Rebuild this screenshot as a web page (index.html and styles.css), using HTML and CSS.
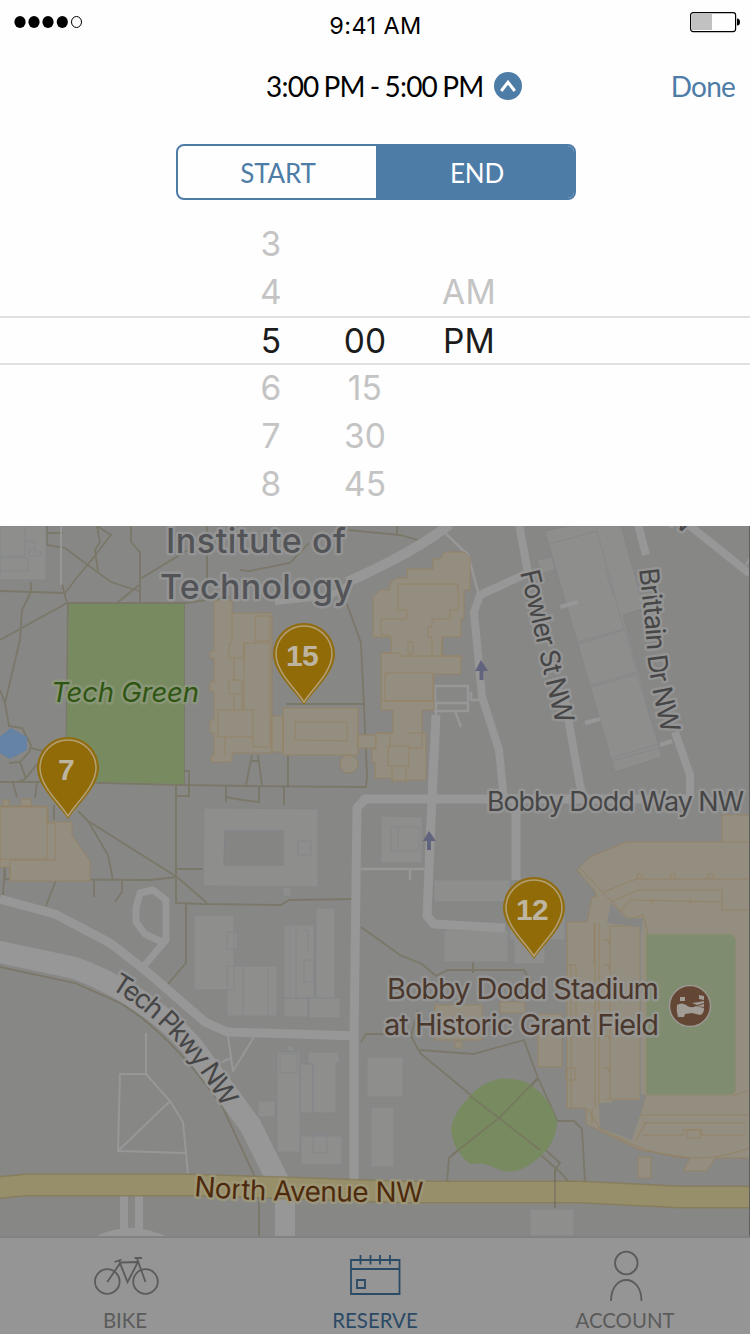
FILE: index.html
```html
<!DOCTYPE html>
<html lang="en">
<head>
<meta charset="utf-8">
<title>Reserve</title>
<link rel="stylesheet" href="styles.css">
</head>
<body>
<div class="screen">
  <section class="panel">
    <header class="status">
      <svg class="signal" width="70" height="14" viewBox="0 0 70 14"><g fill="#000"><ellipse cx="6" cy="7" rx="5.6" ry="6"/><ellipse cx="20" cy="7" rx="5.6" ry="6"/><ellipse cx="34" cy="7" rx="5.6" ry="6"/><ellipse cx="48.300" cy="7" rx="5.600" ry="6"/></g><ellipse cx="62.500" cy="7" rx="5" ry="5.500" fill="none" stroke="#000"/></svg>
      <span class="clock">9:41 AM</span>
      <svg class="battery" width="51" height="22" viewBox="0 0 51 22"><rect x=".6" y="1.600" width="45" height="19" rx="2.500" fill="none" stroke="#000" stroke-width="1.200"/><rect x="2" y="3" width="20" height="16" fill="#c1c1c1"/><path d="M47 7.500q3 0 3 3.500t-3 3.500z" fill="#000"/></svg>
    </header>
    <div class="titlebar">
      <span class="range">3:00 PM - 5:00 PM</span>
      <svg class="chevron" width="28" height="28" viewBox="0 0 28 28"><circle cx="14" cy="14" r="14" fill="#4d7ca7"/><path d="M7.200 19 14 10.300 20.800 19" fill="none" stroke="#fff" stroke-width="3"/></svg>
      <span class="done">Done</span>
    </div>
    <div class="segment"><span class="seg">START</span><span class="seg seg-on">END</span></div>
    <div class="picker">
      <div class="row"><span>3</span><span></span><span></span></div>
      <div class="row"><span>4</span><span></span><span>AM</span></div>
      <div class="row row-on"><span>5</span><span>00</span><span>PM</span></div>
      <div class="row"><span>6</span><span>15</span><span></span></div>
      <div class="row"><span>7</span><span>30</span><span></span></div>
      <div class="row"><span>8</span><span>45</span><span></span></div>
    </div>
  </section>

  <svg class="map" width="750" height="710" viewBox="0 526 750 710">
    <defs>
      <path id="p-fowler" d="M520 572 Q534 630 541 661 T560 740"/>
      <path id="p-brittain" d="M639 569 Q645 618 647 650 Q649 680 664 742"/>
      <path id="p-tech" d="M110 988 C149 1012 187 1042 229 1119"/>
      <path id="p-north" d="M194 1196 Q240 1200 290 1201 T440 1202"/>
      <g id="pin"><path d="M0 50C-8 37-31 18-31-1A31 31 0 0 1 31-1C31 18 8 37 0 50Z" fill="#906d10"/><path d="M0 47C-8 34-28 17-28-1A28 28 0 0 1 28-1C28 17 8 34 0 47Z" fill="#906b08" stroke="#b3a076" stroke-width="1.500"/></g>
    </defs>
    <rect x="0" y="526" width="750" height="710" fill="#878786"/>

    <!-- footpaths -->
    <g class="trail">
      <path d="M0 591 65 593 75 580 93 558 111 535 97 526M47 526V545L65 548 85 563 111 582 139 591M97 526 100 542 95 550 98 571M131 526V542L140 552V603M140 579 188 550M117 603 139 585M47 533H63M31 582V592L22 610 20 640 5 703 0 690M0 640 67 603 62 584M5 703 9 726 22 728 31 745 29 752 20 762 9 763M31 748 52 753M20 762 26 779M38 763 25 779 18 782M0 782 66 782 184 785 249 786 366 787 367 776 364 706 361 643 347 604M184 603 68 603 66 782M184 603V785M184 603 230 597M207 526V582M240 570 250 571 290 563 309 543M13 783 17 797M37 782 35 798"/>
      <path d="M54 805V820M78 811 88 821 177 877 207 903M88 821 108 855 113 880M5 860V879L150 880 177 877M5 860 3 895M56 880 46 906M94 880V897M122 880V892L115 902M176 785V903L203 904 281 905 289 900 355 899M186 903V963L167 985M177 869H203M184 771H189V796H177M226 786V802M226 797 242 800 259 802V786M284 786V805M286 704H364M252 755 246 785M258 755 262 785M250 761H258M288 756V787"/>
      <path d="M0 967 75 983 120 1003Q170 1033 222 1106L255 1177M259 1196V1236M361 927 400 955 422 964 436 976 448 970H524L532 985M361 1042 366 1034H392M418 1010 411 1036 420 1053 507 1125 560 1172 569 1182M420 1050 473 1054 524 1040 538 1078 557 1120 540 1145 560 1163 555 1170V1208M538 1079 499 1116 449 1158 447 1182M557 1121H574L582 1129 585 1183M473 973V960M348 530 400 535 418 540M397 526V535"/>
    </g>

    <!-- parks and water -->
    <path d="M69 604H184V784L66 781Z" fill="#788b60"/>
    <path d="M495 1080Q510 1076 528 1083 550 1097 557 1122 556 1145 536 1160 515 1178 495 1168 485 1162 470 1164 452 1150 451 1128 455 1110 471 1095 482 1083 495 1080Z" fill="#788b60"/>
    <path d="M470 1096 499 1118 540 1150M537 1079 499 1118 452 1155" class="trail"/>
    <path d="M-2 738 11 728 27 737V750L10 759-2 752Z" fill="#6583a5"/>

    <!-- grey buildings -->
    <g class="grey">
      <path d="M0 526H46V580H0ZM0 558H28V571H0M25 526V556H0"/>
      <path d="M26 541H35V552H41V556H29V549H33"/>
      <path d="M204 808 318 809V887L203 886ZM225 831H283V865H224ZM298 841H311V855H298ZM283 887H291V896H283Z"/>
      <path d="M194 915H234V990H194ZM227 932H237V949H227ZM227 966H277V1016H227ZM243 966V1016M268 970V1016M284 925H314V998H284ZM290 925V998M296 925V998M303 930H308V950M304 960H314V982H304ZM316 908H335V998H316ZM284 998H308V1017H284ZM309 998H340V1018H309Z"/>
      <path d="M381 816 422 817V863H381ZM391 827H419V851H391ZM398 827V851"/>
      <path d="M434 880H510V902H434ZM444 930H508V962H444ZM510 902H565V940H545V964H514V940H510Z"/>
      <path d="M277 1052H300V1152H277ZM280 1054H297V1073H280ZM300 1064H313V1113H300ZM308 1052H339V1063H336V1113H313V1064H308ZM258 1101H275V1117H258ZM301 1136H342V1165H301ZM313 1135H327V1153H313ZM367 1057H403V1097H367ZM371 1107H394V1167H371ZM530 1209H574V1236H530ZM285 1046H293V1052"/>
      <path d="M545 531 570 526H621L644 608 623 615 662 757 615 772ZM549 544 597 531 624 629 578 642M578 644 625 630 637 672 591 685M591 687 637 674 658 744 611 758M611 761 659 748M605 568 613 595M645 700 650 718M537 560 552 557 555 570 542 573Z"/>
    </g>
    <path d="M225 831H283V865H224Z" fill="#858584" stroke="#828386"/>

    <!-- roads -->
    <g class="road">
      <path d="M0 899 55 914 110 943 145 970 205 1022 227 1032 358 1036" stroke-width="9"/>
      <path d="M143 967 166 940V900L153 890 140 893 136 908V922L145 934 164 943" stroke-width="7"/>
      <path d="M-5 951 75 968Q145 994 192 1046L250 1125 280 1185" stroke-width="22"/>
      <path d="M285 1177V1236" stroke-width="20"/>
      <path d="M354 1182V1036L357 808 365 799H487 690" stroke-width="9"/>
      <path d="M347 582Q415 552 450 524" stroke-width="10"/>
      <path d="M275 602 330 596 348 585" stroke-width="6"/>
      <path d="M519 524 528 573 480 595 474 612 482 697 499 750 504 800M563 690 580 785 584 799M638 524 646 555M675 732 690 775V799M690 526 750 574" stroke-width="8"/>
      <path d="M436 715 432 798 427 916 434 924 505 928M516 800V880" stroke-width="9"/>
      <path d="M444 532 468 555 478 592M746 565 750 558M361 869H425M410 870V880M471 692V700L485 700M435 686H468V711H435ZM435 703H468M455 711 461 727M436 702V716" stroke-width="2.500"/>
      <path d="M146 1033V1074L170 1101 183 1122 188 1174M146 1074H120L118 1151 186 1153M118 1151 170 1101M228 1036 233 1071 254 1037M222 1062 231 1058M61 526V585" stroke-width="2"/>
      <path d="M124 1190V1232M139 1190V1232" stroke-width="8"/>
      <path class="apron" d="M97 1236Q130 1220 165 1236Z"/>
      <path d="M578 602 560 607M585 723 600 719M660 745 672 741" stroke-width="4"/>
    </g>
    <path d="M-5 1188 25 1185H190L290 1188 400 1192H580L680 1197H750" class="avenue-edge"/>
    <path d="M-5 1188 25 1185H190L290 1188 400 1192H580L680 1197H750" class="avenue"/>
    <path d="M555 1170V1207" class="trail"/>
    <g fill="#62647d"><path d="M481 660 488 671H483.500V680H479.500V671H475Z"/><path d="M429 831 436 841H431V850H427V841H423Z"/></g>

    <!-- campus buildings -->
    <g class="tan">
      <path d="M214 601H232V613H272V753H232V762H211V756H214V733H210V720H214V691H210V682H214V658H210V651H214Z"/>
      <path class="detail" d="M232 613V643H229V658H244V643H270V747H253V710H218V737H225V755M234 658V680M229 680H242V694H229V680M234 694V710M242 694V710M244 643V710M255 616H270V641H255ZM225 737H253"/>
      <path d="M272 716H283V752H272ZM283 708H358V755H283ZM358 735H376V748H358Z"/>
      <path class="detail" d="M295 722 347 722V741L295 740Z"/>
      <circle cx="349" cy="764" r="9"/>
      <path d="M445 552H464L470 558V590H464V619H461V637H442V656H461V674H434V710H422V733H426V780H408V781H392V778H375V762H372V749H376V733H393V710H381V653H391V637H373V597L380 590H390V582L397 578H407V569H433V559H440Z"/>
      <path class="detail" d="M398 584H458V610H450V619H432V627H428V637H432V656M398 584V610H407V619H381V635H391M442 637V656M408 642H413V654H408ZM381 653H400V656H461M385 673H433V701H385ZM381 701H433M388 746H409V766H388ZM376 733H390V748M407 733H422V748H409M392 766V781M406 766V781"/>
      <path d="M0 807H48V822H72V835L90 861V881H10V867H0ZM3 800H9V806H3ZM21 799H31V806H21Z"/>
      <path class="detail" d="M0 806H47V859H0M45 823H55V860H10V875"/>
      <path d="M577 870 590 857 626 842H722V815H750V1158H715L707 1171H683L690 1158 640 1150 598 1130 586 1124V1108H567V922H587L592 897H597L594 890Z"/>
      <path class="detail" d="M722 842H750M604 892 636 879H750M611 902 638 890H722V910H750M580 868 628 919M620 912 630 900 722 902M652 899V904M690 899V904M637 879V874H642V879M671 879V874H675V879M708 879V874H713V879M629 919 643 915 648 934M595 923V1108M599 923V1108M610 926H640V1099H606M571 965V1108M594 923V965M610 926V1099M567 965H576V1033M603 940H609V945M603 965H609V970M603 1036H609V1041M603 1068H609V1073"/>
      <path d="M538 1014H562V1067H538ZM435 1005H482V1040H435ZM455 1042H462V1048H455ZM500 1002H525V1013H500ZM638 1157H651V1178H638Z"/>
      <path class="detail" d="M646 1095H735L750 1090M640 1115H750M643 1123H745M632 1144Q690 1170 750 1148M636 1140 646 1122M643 1135H683V1130H702V1135H745M687 1130H700V1138H687ZM646 1095 638 1120M587 1108 600 1129 632 1144M592 1108V1124M566 1068H575V1080H566Z"/>
    </g>
    <path d="M599 1103 600 1128 632 1140 646 1096 641 1094V934L643 918 627 919 611 903 607 923 640 927V1100H612V1103Z" fill="#868685"/>
    <path d="M646 934H732L736 939V1090L733 1095H646Z" fill="#7f8c6f" stroke="#958c74"/>

    <!-- labels -->
    <g class="label campus"><text x="166" y="553" textLength="180">Institute of</text><text x="160" y="599" textLength="193">Technology</text></g>
    <text class="label park" x="51" y="702" textLength="148">Tech Green</text>
    <g class="label street">
      <text textLength="157"><textPath href="#p-fowler">Fowler St NW</textPath></text>
      <text textLength="167"><textPath href="#p-brittain">Brittain Dr NW</textPath></text>
      <text textLength="167"><textPath href="#p-tech">Tech Pkwy NW</textPath></text>
      <text x="487" y="811" textLength="257">Bobby Dodd Way NW</text>
      <text transform="translate(664 521) rotate(30)">W</text>
    </g>
    <text class="label avenue-name" textLength="230"><textPath href="#p-north">North Avenue NW</textPath></text>
    <g class="label venue"><text x="387" y="999" textLength="272">Bobby Dodd Stadium</text><text x="384" y="1035" textLength="275">at Historic Grant Field</text></g>
    <circle cx="690" cy="1006" r="20.500" fill="#644634" stroke="#9b9793" stroke-width="1.500"/>
    <path d="M677 1005Q682 1002 686 1005 691 1009 696 1006L704 1008Q704 1014 700 1015L692 1013 685 1014 684 1017H678Q676 1011 677 1005ZM680 997H685V1001H680ZM699 995 704 996V1000L699 999ZM692 1003Q700 1002 704 1001V1003L697 1005ZM697 1006 704 1004V1007Z" fill="#a29c97"/>

    <!-- stations -->
    <use href="#pin" x="304" y="655"/><use href="#pin" x="68" y="769"/><use href="#pin" x="534" y="909"/>
    <g class="count"><text x="302" y="666">15</text><text x="66" y="780">7</text><text x="532" y="920">12</text></g>
    <path d="M749.500 526V1236" stroke="#60605f"/>
  </svg>

  <nav class="tabs">
    <div class="tab"><svg class="low" width="68" height="50" viewBox="91 1252 68 50"><g class="line"><circle cx="107.300" cy="1281.500" r="12.300"/><circle cx="145.500" cy="1281.500" r="12.300"/><path d="M107.300 1282 120.500 1262.500 138 1262 127.500 1282 119 1260.500M114.500 1262 121.500 1259.500M137 1258.500 145.500 1282M134.500 1258H142"/></g></svg><span>BIKE</span></div>
    <div class="tab tab-on"><svg class="low" width="54" height="50" viewBox="348 1252 54 50"><g class="line"><path d="M351 1260H399.500V1294H351ZM351 1269H399.500M360.500 1255V1264.500M370.500 1255V1264.500M380 1255V1264.500M390 1255V1264.500M357 1280H365V1288H357Z"/></g></svg><span>RESERVE</span></div>
    <div class="tab"><svg width="40" height="52" viewBox="605 1250 40 52"><g class="line"><circle cx="626.300" cy="1263" r="11.300"/><path d="M611 1301C611 1273 641.500 1273 641.500 1301"/></g></svg><span>ACCOUNT</span></div>
  </nav>
</div>
</body>
</html>
```
FILE: styles.css
```css
* { box-sizing: border-box; }
body { margin: 0; }
.screen {
  width: 750px; height: 1334px; overflow: hidden;
  display: flex; flex-direction: column;
  font-family: Lato, sans-serif; background: #959595;
}
.panel { height: 526px; flex: none; background: #fefefe; display: flex; flex-direction: column; }
.status {
  height: 50px; padding: 0 9px 0 14px;
  display: grid; grid-template-columns: 1fr auto 1fr; align-items: start;
  font: 23.5px/28px Inter, sans-serif; letter-spacing: .4px; color: #000;
}
.signal { margin-top: 15px; }
.clock { margin: 12px 4px 0 0; }
.battery { justify-self: end; margin-top: 11px; }
.titlebar {
  height: 72px; padding: 0 15px 0 266px;
  display: flex; align-items: center;
  font-size: 28px; line-height: 34px; letter-spacing: -.8px; color: #000;
}
.range { word-spacing: -1.3px; }
.chevron { margin-left: 11px; }
.done { margin-left: auto; color: #4d7ca7; letter-spacing: -.8px; }
.segment {
  width: 400px; height: 56px; margin: 22px 0 0 176px; flex: none;
  display: grid; grid-template-columns: 198px 198px; overflow: hidden;
  border: 2px solid #4d7ca7; border-radius: 8px;
}
.seg { display: flex; align-items: center; justify-content: center; padding: 1px 0 0 2px; font-size: 26px; letter-spacing: -.2px; color: #4d7ca7; }
.seg-on { padding-left: 4px; background: #4d7ca7; color: #fefefe; }
.picker { margin-top: 20px; font: 33.5px/49px Inter, sans-serif; color: #c4c4c4; letter-spacing: .2px; }
.row {
  height: 48px; padding-left: 224px;
  display: grid; grid-template-columns: 94px 94px 114px; text-align: center;
}
.row-on { height: 49px; margin-bottom: -1px; border-top: 2px solid #e0e0e0; border-bottom: 2px solid #e0e0e0; color: #1c1c1c; line-height: 46px; }
.map { flex: none; display: block; }
.trail { fill: none; stroke: #77735f; stroke-opacity: .75; stroke-width: 1.800; }
.grey path { fill: #8e8e8d; stroke: #848588; stroke-width: .8; }
.tan path, .tan circle { fill: #948e80; stroke: #938266; stroke-width: 1; }
.tan .detail { fill: none; }
.road path { fill: none; stroke: #979797; stroke-linejoin: round; }
.road .apron { fill: #979797; stroke: none; }
.avenue-edge { fill: none; stroke: #877b55; stroke-width: 23; stroke-opacity: .8; }
.avenue { fill: none; stroke: #978f69; stroke-width: 20; }
.label { font-family: Inter, sans-serif; paint-order: stroke; stroke: #989898; stroke-width: 5px; stroke-opacity: .8; stroke-linejoin: round; }
.campus { font-size: 34px; font-weight: 500; fill: #535458; }
.park { font-size: 27.5px; font-style: italic; font-weight: 400; fill: #2f5513; stroke: #8c987c; }
.street { font-size: 27px; fill: #464647; }
.avenue-name { font-size: 28px; fill: #4e2a0c; stroke: #a09a7c; }
.venue { font-size: 29px; fill: #4b382c; }
.count { font: bold 30px "Liberation Sans", sans-serif; fill: #bdb5a1; text-anchor: middle; letter-spacing: -.8px; }
.tabs {
  height: 98px; flex: none; border-top: 2px solid #828282;
  display: grid; grid-template-columns: repeat(3, 1fr);
  color: #5b5b5b; font-size: 20.4px; line-height: 24px;
}
.tab { display: flex; flex-direction: column; align-items: center; justify-content: space-between; padding: 12px 0 2px; }
.low { margin-top: 2px; }
.tab-on { color: #2b4a66; }
.line { fill: none; stroke: currentColor; stroke-width: 1.800; }
```
